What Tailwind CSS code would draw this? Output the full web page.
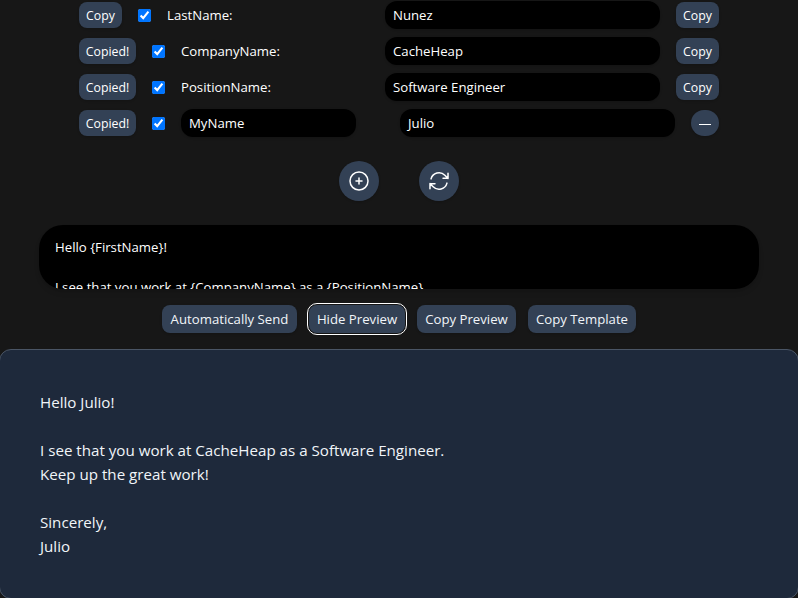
<!DOCTYPE html>
<html lang="en">
<head>
<meta charset="utf-8">
<title>Message Template</title>
<script src="https://cdn.jsdelivr.net/npm/@tailwindcss/browser@4"></script>
</head>
<body class="h-[598px] overflow-hidden bg-[#171717] font-['Open_Sans','Noto_Sans',sans-serif] text-[13.2px] text-white">
<main class="flex flex-col">
  <section class="mx-auto mt-px flex w-[640px] flex-col gap-2">
    <div class="flex h-7 items-center">
      <button class="h-[26px] w-[43px] rounded-lg bg-[#334155] pt-0.5 text-[12.3px] shadow-sm">Copy</button>
      <input type="checkbox" checked class="ml-4 size-[13px]">
      <label class="ml-4 flex-1 pt-0.5">LastName:</label>
      <div class="flex h-7 w-[275px] items-center rounded-xl bg-black px-2 pt-0.5 shadow-sm">Nunez</div>
      <button class="ml-4 h-[26px] w-[43px] rounded-lg bg-[#334155] pt-0.5 text-[12.3px] shadow-sm">Copy</button>
    </div>
    <div class="flex h-7 items-center">
      <button class="h-[26px] w-[57px] rounded-lg bg-[#334155] pt-0.5 text-[12.3px] shadow-sm">Copied!</button>
      <input type="checkbox" checked class="ml-4 size-[13px]">
      <label class="ml-4 flex-1 pt-0.5">CompanyName:</label>
      <div class="flex h-7 w-[275px] items-center rounded-xl bg-black px-2 pt-0.5 shadow-sm">CacheHeap</div>
      <button class="ml-4 h-[26px] w-[43px] rounded-lg bg-[#334155] pt-0.5 text-[12.3px] shadow-sm">Copy</button>
    </div>
    <div class="flex h-7 items-center">
      <button class="h-[26px] w-[57px] rounded-lg bg-[#334155] pt-0.5 text-[12.3px] shadow-sm">Copied!</button>
      <input type="checkbox" checked class="ml-4 size-[13px]">
      <label class="ml-4 flex-1 pt-0.5">PositionName:</label>
      <div class="flex h-7 w-[275px] items-center rounded-xl bg-black px-2 pt-0.5 shadow-sm">Software Engineer</div>
      <button class="ml-4 h-[26px] w-[43px] rounded-lg bg-[#334155] pt-0.5 text-[12.3px] shadow-sm">Copy</button>
    </div>
    <div class="flex h-7 items-center">
      <button class="h-[26px] w-[57px] rounded-lg bg-[#334155] pt-0.5 text-[12.3px] shadow-sm">Copied!</button>
      <input type="checkbox" checked class="ml-4 size-[13px]">
      <div class="ml-4 flex h-7 w-[175px] items-center rounded-xl bg-black px-2 pt-0.5 shadow-sm">MyName</div>
      <div class="ml-auto flex h-7 w-[275px] items-center rounded-xl bg-black px-2 pt-0.5 shadow-sm">Julio</div>
      <button class="ml-4 flex h-[26px] w-7 items-center justify-center rounded-full bg-[#334155] shadow-sm" aria-label="Remove"><span class="mt-0.5 h-px w-3 bg-white"></span></button>
    </div>
  </section>

  <div class="mt-6 flex justify-center gap-10">
    <button class="flex size-10 items-center justify-center rounded-full bg-[#334155] shadow-sm" aria-label="Add">
      <svg class="size-6" viewBox="0 0 24 24" fill="none" stroke="currentColor" stroke-width="1.5" stroke-linecap="round" stroke-linejoin="round"><path d="M12 9v6m3-3H9m12 0a9 9 0 1 1-18 0 9 9 0 0 1 18 0Z"/></svg>
    </button>
    <button class="flex size-10 items-center justify-center rounded-full bg-[#334155] shadow-sm" aria-label="Refresh">
      <svg class="size-6" viewBox="0 0 24 24" fill="none" stroke="currentColor" stroke-width="1.5" stroke-linecap="round" stroke-linejoin="round"><path d="M16.023 9.348h4.992v-.001M2.985 19.644v-4.992m0 0h4.992m-4.993 0 3.181 3.183a8.25 8.25 0 0 0 13.803-3.7M4.031 9.865a8.25 8.25 0 0 1 13.803-3.7l3.181 3.182m0-4.991v4.99"/></svg>
    </button>
  </div>

  <div class="mx-auto mt-6 h-16 w-[720px] overflow-hidden rounded-3xl bg-black px-4 pt-3 leading-5 shadow-md">
    <p>Hello {FirstName}!</p>
    <p class="mt-5 whitespace-nowrap">I see that you work at {CompanyName} as a {PositionName}.</p>
  </div>

  <div class="mt-4 ml-[162px] flex h-7 gap-3 text-[13.2px] font-medium text-slate-100">
    <button class="w-[135px] rounded-lg bg-[#334155] pt-0.5 shadow-sm">Automatically Send</button>
    <button class="w-24 rounded-lg bg-[#334155] pt-0.5 shadow-sm outline-1 outline-offset-1 outline-white">Hide Preview</button>
    <button class="w-[99px] rounded-lg bg-[#334155] pt-0.5 shadow-sm">Copy Preview</button>
    <button class="w-[108px] rounded-lg bg-[#334155] pt-0.5 shadow-sm">Copy Template</button>
  </div>

  <article class="-mx-px mt-4 h-[250px] rounded-xl border border-gray-600 bg-[#1e293b] px-10 pt-10 text-[15.15px] leading-6 font-medium text-slate-100">
    <p>Hello Julio!</p>
    <p class="mt-6">I see that you work at CacheHeap as a Software Engineer.</p>
    <p>Keep up the great work!</p>
    <p class="mt-6">Sincerely,</p>
    <p>Julio</p>
  </article>
</main>
</body>
</html>
